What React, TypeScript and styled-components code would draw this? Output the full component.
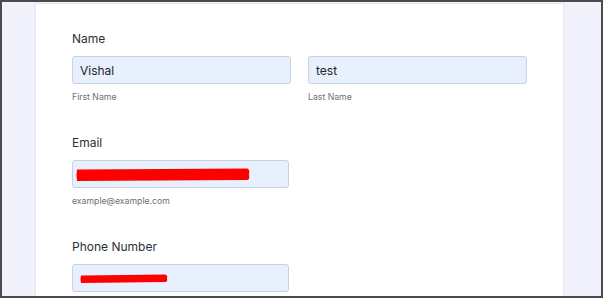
import React from 'react';
import styled, { createGlobalStyle } from 'styled-components';

const GlobalStyle = createGlobalStyle`
  html, body {
    margin: 0;
    padding: 0;
    background: #ffffff;
  }
  body {
    font-family: Inter, "Noto Sans", sans-serif;
  }
`;

const Frame = styled.div`
  width: 603px;
  height: 298px;
  box-sizing: border-box;
  border: 2px solid #4a4a4f;
  background-color: #f1f1fb;
  overflow: hidden;
  display: flex;
  padding-left: 33px;
`;

const Card = styled.div`
  width: 529px;
  flex-shrink: 0;
  margin-top: 1px;
  background-color: #ffffff;
  border: 1px solid #e6e6ee;
  border-bottom: none;
  padding: 26px 36px 0;
  box-sizing: border-box;
`;

const Section = styled.div`
  margin-bottom: 30px;
`;

const Label = styled.div`
  font-size: 12px;
  line-height: 18px;
  color: #2b2f36;
  margin-bottom: 8px;
`;

const Row = styled.div`
  display: grid;
  grid-template-columns: 219px 219px;
  column-gap: 17px;
`;

const Column = styled.div`
  display: flex;
  flex-direction: column;
`;

const InputBox = styled.div<{ $narrow?: boolean }>`
  height: 28px;
  width: ${(p) => (p.$narrow ? '217px' : 'auto')};
  box-sizing: border-box;
  border: 1px solid #c8d2e2;
  border-radius: 3px;
  background-color: #e8f0fe;
  display: flex;
  align-items: center;
  padding: 0 7px;
  font-size: 12px;
  color: #1f2328;
`;

const Hint = styled.div`
  margin-top: 6px;
  font-size: 8.7px;
  line-height: 14px;
  color: #6b7079;
`;

const Redaction: React.FC<{ width: number; thickness: number; offset: number }> = ({ width, thickness, offset }) => {
  const h = thickness + 1;
  return (
    <svg width={width} height={h} style={{ marginLeft: offset }}>
      <path
        d={`M1 1.5 L${width - 3} 0.5 Q${width} 1 ${width - 1} ${h / 2} Q${width} ${h - 1} ${width - 3} ${h - 1} L1 ${h} Q0 ${h / 2} 1 1.5 Z`}
        fill="#ff0000"
      />
    </svg>
  );
};

const App: React.FC = () => {
  return (
    <>
      <GlobalStyle />
      <Frame>
        <Card>
          <Section>
            <Label>Name</Label>
            <Row>
              <Column>
                <InputBox>Vishal</InputBox>
                <Hint>First Name</Hint>
              </Column>
              <Column>
                <InputBox>test</InputBox>
                <Hint>Last Name</Hint>
              </Column>
            </Row>
          </Section>
          <Section>
            <Label>Email</Label>
            <Row>
              <Column>
                <InputBox $narrow>
                  <Redaction width={174} thickness={12} offset={-4} />
                </InputBox>
                <Hint>example@example.com</Hint>
              </Column>
            </Row>
          </Section>
          <Section>
            <Label>Phone Number</Label>
            <Row>
              <Column>
                <InputBox $narrow>
                  <Redaction width={88} thickness={8} offset={0} />
                </InputBox>
              </Column>
            </Row>
          </Section>
        </Card>
      </Frame>
    </>
  );
};

export default App;
